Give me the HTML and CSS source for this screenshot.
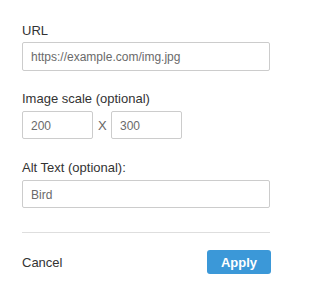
FILE: index.html
```html
<!DOCTYPE html>
<html>
<head>
<meta charset="utf-8">
<link rel="stylesheet" href="styles.css">
</head>
<body>
<div class="dialog">
  <div class="field field-url">
    <label class="label">URL</label>
    <input class="input" type="text" value="https://example.com/img.jpg">
  </div>
  <div class="field field-scale">
    <label class="label">Image scale (optional)</label>
    <div class="scale-row">
      <input class="input input-small" type="text" value="200">
      <span class="times">X</span>
      <input class="input input-small" type="text" value="300">
    </div>
  </div>
  <div class="field field-alt">
    <label class="label">Alt Text (optional):</label>
    <input class="input" type="text" value="Bird">
  </div>
  <hr class="divider">
  <div class="actions">
    <span class="cancel">Cancel</span>
    <button class="apply">Apply</button>
  </div>
</div>
</body>
</html>
```

FILE: styles.css
```css
html, body {
  margin: 0;
  padding: 0;
  background: #fff;
}
body {
  font-family: "Liberation Sans", Arial, sans-serif;
  color: #333;
}
.dialog {
  padding: 23px 21px 0 22px;
  width: 248px;
}
.field {
  display: flex;
  flex-direction: column;
}
.field-scale {
  margin-top: 20px;
}
.field-alt {
  margin-top: 21px;
}
.label {
  display: block;
  font-size: 13px;
  line-height: 16px;
  margin-bottom: 3px;
  color: #333;
}
.field-scale .label,
.field-alt .label {
  margin-bottom: 4px;
}
.input {
  box-sizing: border-box;
  width: 248px;
  height: 29px;
  margin: 0;
  padding: 1px 8px 0 8px;
  border: 1px solid #cccccc;
  border-radius: 2px;
  font-family: "Liberation Sans", Arial, sans-serif;
  font-size: 12px;
  color: #6a6a6a;
  background: #fff;
  outline: none;
}
.field-scale .input,
.field-alt .input {
  height: 28px;
}
.scale-row {
  display: flex;
  align-items: center;
  gap: 5px;
}
.input-small {
  width: 71px;
}
.times {
  font-size: 13px;
  color: #666;
  width: 8px;
  text-align: center;
}
.divider {
  border: none;
  border-top: 1px solid #dedede;
  margin: 24px 0 0 0;
  height: 0;
}
.actions {
  display: flex;
  justify-content: space-between;
  align-items: center;
  margin-top: 17px;
}
.cancel {
  font-size: 13px;
  color: #333;
}
.apply {
  width: 64px;
  height: 24px;
  border: none;
  border-radius: 3px;
  background: #3b98d8;
  color: #fff;
  font-family: "Liberation Sans", Arial, sans-serif;
  font-weight: bold;
  font-size: 13px;
  padding: 0;
  margin-right: -1px;
}
```
